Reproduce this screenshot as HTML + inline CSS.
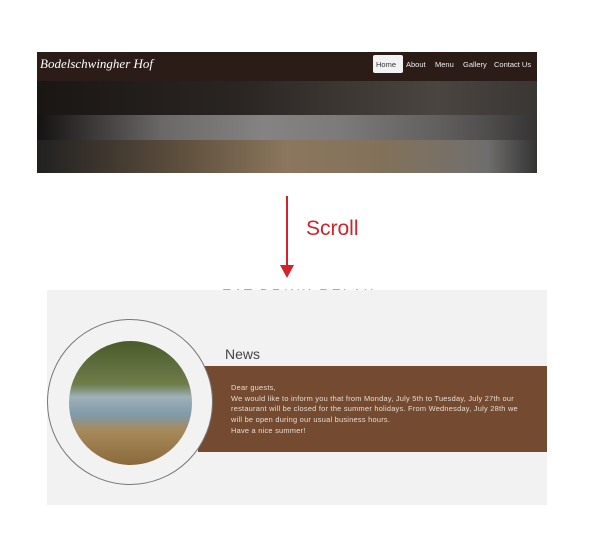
<!DOCTYPE html>
<html><head><style>
body{margin:0;width:595px;height:546px;background:#fff;position:relative;overflow:hidden;font-family:"Liberation Sans",sans-serif}
.a{position:absolute}
.n{position:absolute;top:60px;font-size:7.5px;color:#eee;white-space:nowrap}
</style></head><body>
<div class="a" style="left:37px;top:52px;width:500px;height:29px;background:#2b1c18"></div>
<div class="a" style="left:40px;top:56px;color:#fff;font-family:'Liberation Serif',serif;font-style:italic;font-size:13px;">Bodelschwingher Hof</div>
<div class="a" style="left:373px;top:55px;width:30px;height:18px;background:#f2f2f2;border-radius:2px"></div>
<div class="n" style="left:376px;color:#333">Home</div>
<div class="n" style="left:406px">About</div>
<div class="n" style="left:435px">Menu</div>
<div class="n" style="left:463px">Gallery</div>
<div class="n" style="left:494px">Contact Us</div>
<div class="a" style="left:37px;top:81px;width:500px;height:92px;background:linear-gradient(90deg,#1a1614 0%,#2a2522 40%,#3b3632 60%,#4a4541 80%,#3a3633 100%)"></div>
<div class="a" style="left:37px;top:140px;width:500px;height:33px;background:linear-gradient(90deg,#222 0%,#6b5a45 30%,#9a8466 50%,#8d7a60 70%,#777 90%,#333 100%);opacity:.85"></div>
<div class="a" style="left:37px;top:115px;width:500px;height:25px;background:linear-gradient(90deg,#111 0%,#888 25%,#aaa 45%,#999 60%,#777 75%,#555 90%,#333 100%);opacity:.7"></div>
<div class="a" style="left:286px;top:196px;width:2px;height:72px;background:#d3222a"></div>
<div class="a" style="left:280px;top:265px;width:0;height:0;border-left:7px solid transparent;border-right:7px solid transparent;border-top:13px solid #d3222a"></div>
<div class="a" style="left:306px;top:217px;font-size:21px;color:#d3222a">Scroll</div>
<div class="a" style="left:47px;top:290px;width:500px;height:215px;background:#f2f2f2"></div>
<div class="a" style="left:222px;top:287px;height:3px;overflow:hidden;font-size:14px;line-height:14px;color:#555;letter-spacing:2px">EAT DRINK RELAX</div>
<div class="a" style="left:198px;top:366px;width:349px;height:86px;background:#744a30"></div>
<div class="a" style="left:47px;top:319px;width:166px;height:166px;border:1px solid #777;border-radius:50%;box-sizing:border-box;background:#f2f2f2"></div>
<div class="a" style="left:69px;top:341px;width:123px;height:124px;border-radius:50%;background:linear-gradient(180deg,#4a5a2a 0%,#6e7d4a 35%,#9fb0b8 45%,#7f9aa8 60%,#a88a5a 72%,#8a6a3c 100%)"></div>
<div class="a" style="left:225px;top:346px;font-size:14px;color:#444">News</div>
<div class="a" style="left:231px;top:383px;width:300px;font-size:7.4px;line-height:10.7px;letter-spacing:0.25px;color:#e8ddd5">Dear guests,<br>We would like to inform you that from Monday, July 5th to Tuesday, July 27th our restaurant will be closed for the summer holidays. From Wednesday, July 28th we will be open during our usual business hours.<br>Have a nice summer!</div>
</body></html>
